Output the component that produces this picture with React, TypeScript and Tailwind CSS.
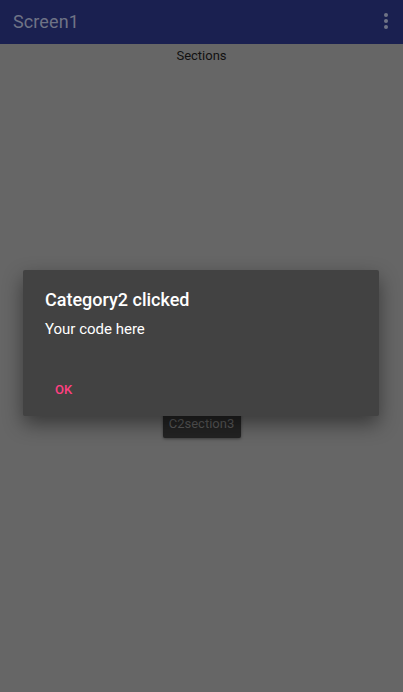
import React from 'react';

const App: React.FC = () => {
  return (
    <div className="relative w-[403px] h-[692px] overflow-hidden bg-[#666666] font-['Roboto',sans-serif]">
      {/* App bar */}
      <header className="h-[44px] bg-[#1a2050] flex items-center justify-between pl-[13px] pr-[15px]">
        <h1 className="text-[18px] text-[#6f7386] leading-none tracking-[0.1px]">Screen1</h1>
        <div className="flex flex-col gap-[2px] -mt-[2px]">
          <span className="w-[4px] h-[4px] rounded-full bg-[#6f7386]"></span>
          <span className="w-[4px] h-[4px] rounded-full bg-[#6f7386]"></span>
          <span className="w-[4px] h-[4px] rounded-full bg-[#6f7386]"></span>
        </div>
      </header>

      {/* Page content */}
      <div className="flex flex-col items-center">
        <p className="mt-[4px] text-[13px] leading-[15px] text-[#111111]">Sections</p>
        <div className="mt-[339px] w-[78px] h-[36px] bg-[#232323] rounded-[2px] shadow-[0_1px_3px_rgba(0,0,0,0.4)] flex items-end justify-center pb-[8px]">
          <span className="text-[13px] leading-none text-[#5c5c5c]">C2section3</span>
        </div>
      </div>

      {/* Dialog */}
      <div className="absolute left-[23px] top-[270px] w-[356px] h-[146px] bg-[#424242] rounded-[2px] shadow-[0_8px_20px_rgba(0,0,0,0.45)] pl-[22px] pt-[19px]">
        <h2 className="text-[18px] font-medium text-white leading-[22px]">Category2 clicked</h2>
        <p className="mt-[9px] text-[15px] text-white leading-[18px]">Your code here</p>
        <button className="absolute left-[32px] top-[113px] text-[13px] font-medium text-[#ff4081] leading-none">OK</button>
      </div>
    </div>
  );
};

export default App;
